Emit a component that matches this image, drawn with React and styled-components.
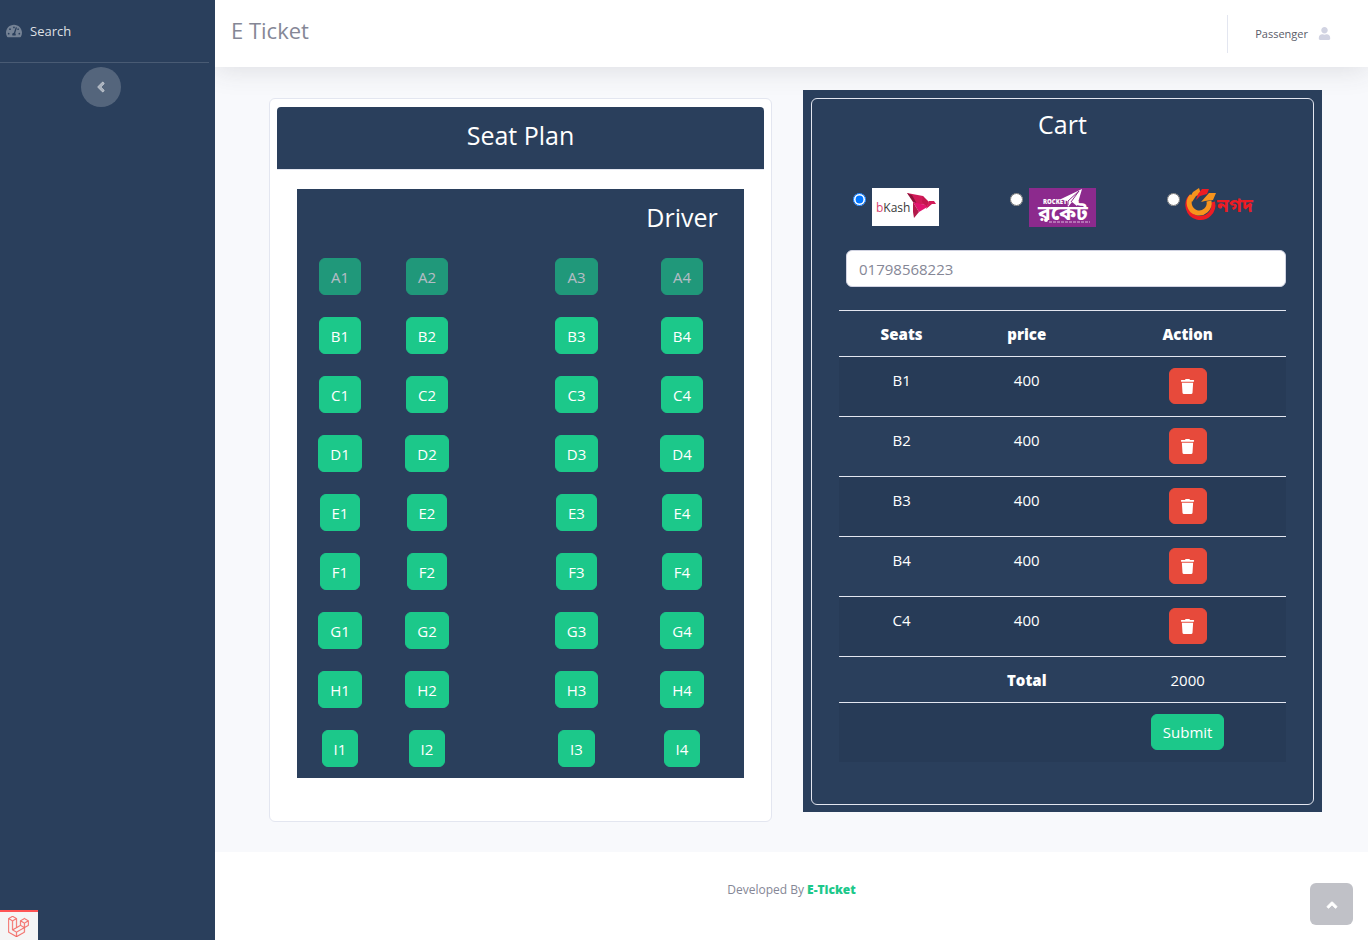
import React, { useState } from 'react';
import styled, { createGlobalStyle } from 'styled-components';
import { FaTachometerAlt, FaAngleLeft, FaAngleUp, FaUser, FaTrash, FaLaravel } from 'react-icons/fa';

const navy = '#2a3f5c';
const green = '#1cc88a';
const line = '#e3e6f0';

const GlobalStyle = createGlobalStyle`
  *, *::before, *::after { box-sizing: border-box; }
  body {
    margin: 0;
    font-family: "Segoe UI", "Open Sans", "Noto Sans", sans-serif;
    font-size: 15px;
    line-height: 23px;
    color: #858796;
    background: ${navy};
  }
  button, input { font: inherit; }
`;

const Page = styled.div`
  display: flex;
  min-height: 100vh;
`;

const Sidebar = styled.nav`
  position: relative;
  z-index: 1;
  flex: 0 0 215px;
  display: flex;
  flex-direction: column;
  padding-right: 6px;
  background: ${navy};
`;

const NavLink = styled.a`
  display: flex;
  align-items: center;
  gap: 8px;
  height: 62px;
  padding-left: 6px;
  font-size: 13px;
  color: rgba(255, 255, 255, 0.85);
  text-decoration: none;
  svg { color: rgba(255, 255, 255, 0.35); }
`;

const Divider = styled.hr`
  width: 100%;
  margin: 0 0 4px;
  border: 0;
  border-top: 1px solid rgba(255, 255, 255, 0.15);
`;

const CollapseButton = styled.button`
  display: flex;
  align-items: center;
  justify-content: center;
  width: 40px;
  height: 40px;
  margin-left: 81px;
  padding: 0;
  border: 0;
  border-radius: 50%;
  background: rgba(255, 255, 255, 0.2);
  color: rgba(255, 255, 255, 0.5);
  svg { stroke: currentColor; stroke-width: 24px; }
`;

const Content = styled.div`
  flex: 1;
  min-width: 0;
  display: flex;
  flex-direction: column;
  background: #f8f9fc;
`;

const Topbar = styled.header`
  display: flex;
  align-items: center;
  justify-content: space-between;
  height: 67px;
  padding: 0 37px 0 16px;
  background: #fff;
  box-shadow: 0 2px 28px rgba(58, 59, 69, 0.15);
`;

const Brand = styled.h1`
  margin: 0;
  padding-bottom: 7px;
  font-size: 22px;
  font-weight: 400;
  line-height: 28px;
`;

const UserMenu = styled.a`
  display: flex;
  align-items: center;
  gap: 10px;
  height: 38px;
  padding-left: 27px;
  border-left: 1px solid ${line};
  font-size: 11px;
  line-height: 24px;
  color: #5a5c69;
  text-decoration: none;
  svg { color: #d1d3e2; }
`;

const Main = styled.main`
  flex: 1;
  display: grid;
  grid-template-columns: 1fr 1fr;
  align-items: start;
  gap: 23px;
  padding: 23px 46px 22px;
`;

const Frame = styled.section`
  padding: ${(p) => (p.$dark ? '8px 8px 7px' : '8px')};
  background: ${(p) => (p.$dark ? navy : 'transparent')};
`;

const Card = styled.div`
  padding: ${(p) => (p.$dark ? '0 27px 42px' : '8px 7px 43px')};
  border: 1px solid ${line};
  border-radius: 6px;
  background: ${(p) => (p.$dark ? navy : '#fff')};
`;

const Heading = styled.h2`
  margin: 0;
  font-size: 25px;
  font-weight: 400;
  line-height: 34px;
  text-align: center;
  color: #fff;
`;

const CardHeader = styled.div`
  height: 63px;
  padding-top: 11px;
  border-bottom: 1px solid ${line};
  border-radius: 4px 4px 0 0;
  background: ${navy};
`;

const SeatGrid = styled.div`
  display: grid;
  grid-template-columns: 86fr 88fr 62fr 87fr 124fr;
  grid-template-rows: 58px;
  grid-auto-rows: 59px;
  align-items: center;
  justify-items: center;
  margin: 19px 20px 0;
  background: ${navy};
`;

const SeatCell = styled.div`
  grid-column: ${(p) => p.$column};
`;

const DriverHeading = styled(Heading)`
  padding-bottom: 2px;
`;

const Button = styled.button`
  height: 37px;
  padding: 0 11px;
  border: 1px solid ${green};
  border-radius: 6px;
  background: ${green};
  color: #fff;
  &:disabled { opacity: 0.65; }
`;

const SeatButton = styled(Button)`
  padding-top: 2px;
`;

const DeleteButton = styled(Button)`
  display: flex;
  align-items: center;
  justify-content: center;
  width: 38px;
  height: 36px;
  margin: 0 auto 1px;
  padding: 0;
  border-color: #e74a3b;
  background: #e74a3b;
`;

const SubmitButton = styled(Button)`
  display: block;
  height: 36px;
  margin: 0 auto 1px;
`;

const CartHeading = styled(Heading)`
  padding: 8px 0 47px;
`;

const Methods = styled.div`
  display: flex;
  align-items: flex-start;
  justify-content: space-between;
  height: 62px;
  padding: 0 33px 0 14px;
`;

const Method = styled.label`
  display: flex;
  align-items: flex-start;
  gap: 6px;
  input { width: 13px; height: 13px; margin: 5px 0 0; }
  svg { display: block; overflow: visible; }
`;

const PhoneInput = styled.input`
  display: block;
  width: calc(100% - 7px);
  height: 37px;
  margin: 0 0 23px 7px;
  padding: 0 12px;
  border: 1px solid #d1d3e2;
  border-radius: 6px;
  background: #fff;
  color: #6e707e;
  &::placeholder { color: #858796; opacity: 1; }
`;

const CartTable = styled.table`
  width: 100%;
  border-collapse: separate;
  border-spacing: 0;
  table-layout: fixed;
  color: #fff;
  text-align: center;
  th, td {
    padding: 12px 0 10px;
    border-top: 1px solid ${line};
    vertical-align: top;
  }
  th { font-weight: 800; }
  tbody tr:nth-child(odd) { background: rgba(0, 0, 0, 0.05); }
  td:has(button) { padding: 11px 0; }
`;

const Column = styled.col`
  width: ${(p) => p.$width};
`;

const Footer = styled.footer`
  display: flex;
  justify-content: center;
  height: 88px;
  padding-top: 26px;
  background: #fff;
  font-size: 12px;
  a { color: ${green}; font-weight: 800; text-decoration: none; }
`;

const ScrollTop = styled.a`
  position: fixed;
  right: 15px;
  bottom: 15px;
  display: flex;
  align-items: center;
  justify-content: center;
  width: 43px;
  height: 42px;
  padding-top: 2px;
  border-radius: 6px;
  background: #c0c1c7;
  color: #fff;
  svg { stroke: currentColor; stroke-width: 24px; }
`;

const DebugBadge = styled.a`
  position: fixed;
  z-index: 2;
  left: 0;
  bottom: 0;
  display: flex;
  align-items: center;
  justify-content: center;
  width: 38px;
  height: 30px;
  padding-right: 2px;
  border-top: 2px solid #ff5555;
  background: #f5f5f5;
  color: #f4645f;
  svg { stroke: currentColor; stroke-width: 8px; }
`;

function BkashLogo() {
  return (
    <svg width="67" height="38" viewBox="0 0 67 38" role="img" aria-label="bKash">
      <rect width="67" height="38" fill="#fff" />
      <text x="4" y="24" fontFamily="Open Sans, sans-serif" fontSize="12" fill="#3a3a3a">
        <tspan fill="#d8436f">b</tspan>Kash
      </text>
      <path d="M35 5 51 8 54 17 45 16Z" fill="#d11a58" />
      <path d="M35 5 40 7 45 16 41 14Z" fill="#8e1239" />
      <path d="M41 14 57 18 47 24Z" fill="#e2136e" />
      <path d="M41 14 47 24 42 30 41 24Z" fill="#b3194a" />
      <path d="M51 8 57 14 55 19 50 14Z" fill="#c4154e" />
      <path d="M57 13H62L64 16 60 16 54 21Z" fill="#d11a58" />
    </svg>
  );
}

function RocketLogo() {
  return (
    <svg width="67" height="39" viewBox="0 0 67 39" role="img" aria-label="Rocket">
      <rect width="67" height="39" fill="#8c2a8d" />
      <path d="M32 11 53 1 48 18 43 14 39 19 38 13Z" fill="#fff" />
      <path d="M39 17V13L50 3 42 14" fill="none" stroke="#8c2a8d" />
      <text x="14" y="16" fontFamily="Open Sans, sans-serif" fontSize="6" fontWeight="800" fill="#fff">ROCKET</text>
      <text x="9" y="32" fontFamily="Noto Sans Bengali, Noto Sans, sans-serif" fontSize="21" fontWeight="700" fill="#fff">রকেট</text>
      <circle cx="17" cy="32" r="2" fill="#fff" />
      <path d="M20 34H61" stroke="#dcb9dd" strokeDasharray="3 1" />
    </svg>
  );
}

function NagadLogo() {
  return (
    <svg width="67" height="38" viewBox="0 0 67 38" role="img" aria-label="Nagad">
      <path d="M5 8A13 13 0 1 0 27 14" fill="none" stroke="#ed1c24" strokeWidth="4" />
      <path d="M6 8A10 10 0 1 0 23 13" fill="none" stroke="#f7941d" strokeWidth="5" />
      <path d="M7 4 13 0 15 6 10 8 6 14 4 9Z" fill="#f7941d" />
      <path d="M16 1 23 1 21 6 14 8 10 12 12 6Z" fill="#ed1c24" />
      <path d="M23 5 30 5 27 12 19 13 15 14Z" fill="#f7941d" />
      <text x="31" y="24" fontFamily="Noto Sans Bengali, Noto Sans, sans-serif" fontSize="19" fontWeight="700" fill="#ed1c24">নগদ</text>
    </svg>
  );
}

const methods = [
  { id: 'bkash', Logo: BkashLogo },
  { id: 'rocket', Logo: RocketLogo },
  { id: 'nagad', Logo: NagadLogo },
];
const seatRows = ['A', 'B', 'C', 'D', 'E', 'F', 'G', 'H', 'I'];
const seatColumns = [1, 2, 4, 5];
const cart = ['B1', 'B2', 'B3', 'B4', 'C4'];
const price = 400;

export default function App() {
  const [method, setMethod] = useState('bkash');
  return (
    <>
      <GlobalStyle />
      <Page>
        <Sidebar>
          <NavLink href="#search"><FaTachometerAlt size={16} />Search</NavLink>
          <Divider />
          <CollapseButton type="button" aria-label="Collapse sidebar"><FaAngleLeft size={16} /></CollapseButton>
        </Sidebar>
        <Content>
          <Topbar>
            <Brand>E Ticket</Brand>
            <UserMenu href="#profile">Passenger<FaUser size={13} /></UserMenu>
          </Topbar>
          <Main>
            <Frame>
              <Card>
                <CardHeader><Heading>Seat Plan</Heading></CardHeader>
                <SeatGrid>
                  <SeatCell $column={5}><DriverHeading as="h3">Driver</DriverHeading></SeatCell>
                  {seatRows.map((row) => seatColumns.map((column, i) => (
                    <SeatCell key={row + column} $column={column}>
                      <SeatButton type="button" disabled={row === 'A'}>{`${row}${i + 1}`}</SeatButton>
                    </SeatCell>
                  )))}
                </SeatGrid>
              </Card>
            </Frame>
            <Frame $dark>
              <Card $dark>
                <CartHeading>Cart</CartHeading>
                <Methods>
                  {methods.map(({ id, Logo }) => (
                    <Method key={id}>
                      <input type="radio" name="method" checked={method === id} onChange={() => setMethod(id)} />
                      <Logo />
                    </Method>
                  ))}
                </Methods>
                <PhoneInput type="tel" aria-label="Mobile number" placeholder="01798568223" />
                <CartTable>
                  <colgroup>
                    <Column $width="28%" />
                    <Column $width="28%" />
                    <Column $width="44%" />
                  </colgroup>
                  <thead>
                    <tr><th>Seats</th><th>price</th><th>Action</th></tr>
                  </thead>
                  <tbody>
                    {cart.map((seat) => (
                      <tr key={seat}>
                        <td>{seat}</td>
                        <td>{price}</td>
                        <td><DeleteButton type="button" aria-label={`Remove ${seat}`}><FaTrash size={15} /></DeleteButton></td>
                      </tr>
                    ))}
                    <tr><td /><th scope="row">Total</th><td>{cart.length * price}</td></tr>
                    <tr><td /><td /><td><SubmitButton type="submit">Submit</SubmitButton></td></tr>
                  </tbody>
                </CartTable>
              </Card>
            </Frame>
          </Main>
          <Footer><span>Developed By <a href="#home">E-Ticket</a></span></Footer>
        </Content>
      </Page>
      <ScrollTop href="#top" aria-label="Scroll to top"><FaAngleUp size={16} /></ScrollTop>
      <DebugBadge href="#debug" aria-label="Debug bar"><FaLaravel size={21} /></DebugBadge>
    </>
  );
}
